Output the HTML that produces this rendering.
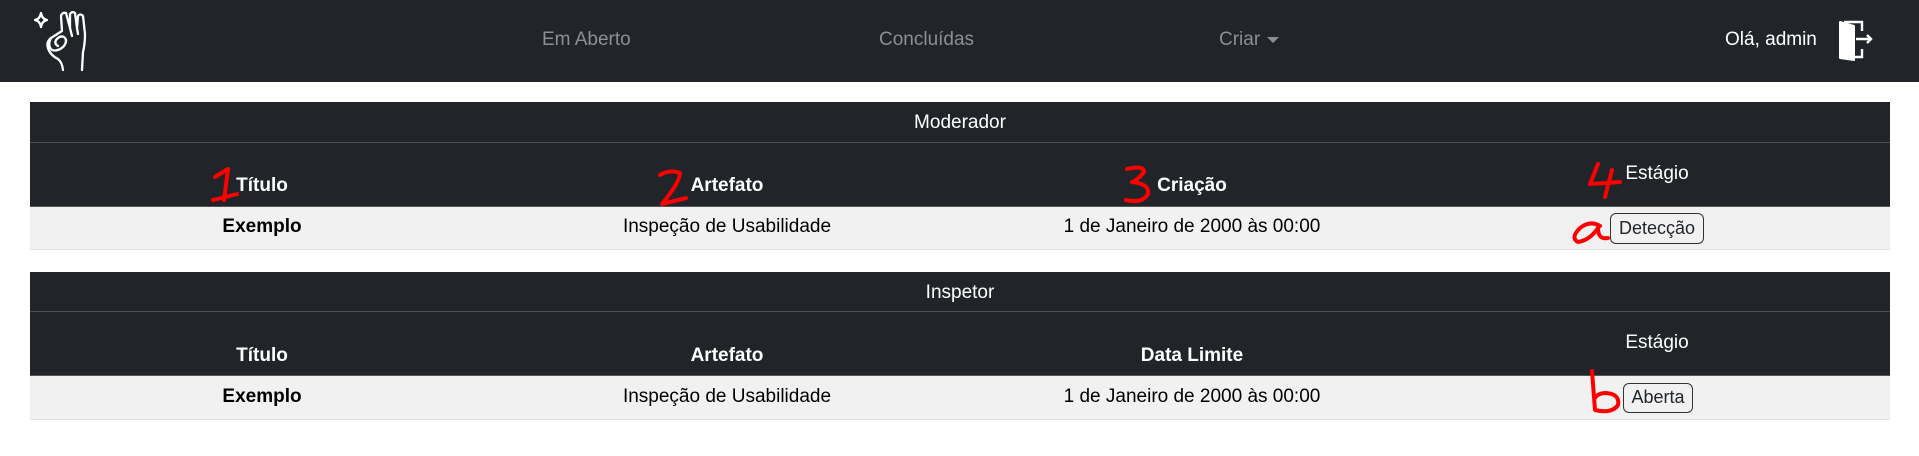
<!DOCTYPE html>
<html><head><meta charset="utf-8"><style>
*{margin:0;padding:0;box-sizing:border-box}
body{width:1919px;height:456px;background:#fff;font-family:"Liberation Sans",sans-serif;position:relative;overflow:hidden}
.abs{position:absolute}
.nav{left:0;top:0;width:1919px;height:82px;background:#212529}
.nl{color:#8c8f93;font-size:19px;top:29px}
.band{left:30px;width:1860px;background:#212529}
.t{position:absolute;transform:translateX(-50%);white-space:nowrap;font-size:19px}
.w{color:#fff}
.b{font-weight:bold}
.btn{position:absolute;border:1.5px solid #333;border-radius:6px;font-size:18px;color:#212529;text-align:center}
</style></head><body>
<div class="abs nav"></div>
<svg class="abs" style="left:0;top:0" width="100" height="82" viewBox="0 0 100 82" fill="none" stroke="#fff" stroke-width="2.3" stroke-linecap="round" stroke-linejoin="round">
<path d="M41 13 Q42 19 47 20 Q42 21 41 27 Q40 21 35 20 Q40 19 41 13Z"/>
<path d="M63 70 Q62 62 58 59 Q50 55 48 48 Q46 42 51 38 L62 31 L61 16 Q62 12 66 13 L70 28 L70 14 Q72 11 75 13 L77 28 L78 16 Q80 13 83 16 L85 34 Q85 44 83 52 L82 70"/>
<path d="M51 38 Q47 46 52 50 Q58 52 64 46 Q68 40 64 37 Q60 35 56 40 Q54 44 58 46"/>
<path d="M70 28 L72 36 M77 28 L78 34"/>
</svg>
<div class="abs nl" style="left:542px">Em Aberto</div>
<div class="abs nl" style="left:879px">Concluídas</div>
<div class="abs nl" style="left:1219px">Criar</div>
<div class="abs" style="left:1267px;top:37px;width:0;height:0;border-left:6px solid transparent;border-right:6px solid transparent;border-top:6px solid #8c8f93"></div>
<div class="abs" style="left:1725px;top:29px;color:#fff;font-size:19px">Olá, admin</div>
<svg class="abs" style="left:1836px;top:20px" width="40" height="42" viewBox="0 0 40 42">
<path d="M4 2 L18 6 L18 40 L4 38 Z" fill="#fff" stroke="#fff" stroke-width="2" stroke-linejoin="round"/>
<path d="M8 2 H26 V11 M26 29 V37 H18" fill="none" stroke="#fff" stroke-width="2.4"/>
<path d="M20 19 H35 M31 15 L35 19 L31 23" fill="none" stroke="#fff" stroke-width="2.4"/>
</svg>

<!-- table 1 -->
<div class="abs band" style="top:102px;height:104px"></div>
<div class="abs" style="left:30px;top:142px;width:1860px;height:1px;background:#4d5154"></div>
<div class="abs" style="left:30px;top:206px;width:1860px;height:44px;background:#f1f1f1;border-top:1px solid #555;border-bottom:1.5px solid #dee2e6"></div>
<div class="t w" style="left:960px;top:112px">Moderador</div>
<div class="t w b" style="left:262px;top:175px">Título</div>
<div class="t w b" style="left:727px;top:175px">Artefato</div>
<div class="t w b" style="left:1192px;top:175px">Criação</div>
<div class="t w" style="left:1657px;top:163px">Estágio</div>
<div class="t b" style="left:262px;top:216px">Exemplo</div>
<div class="t" style="left:727px;top:216px">Inspeção de Usabilidade</div>
<div class="t" style="left:1192px;top:216px">1 de Janeiro de 2000 às 00:00</div>
<div class="btn" style="left:1610px;top:213px;width:94px;height:31px;line-height:28px">Detecção</div>

<!-- table 2 -->
<div class="abs band" style="top:272px;height:103px"></div>
<div class="abs" style="left:30px;top:311px;width:1860px;height:1px;background:#4d5154"></div>
<div class="abs" style="left:30px;top:375px;width:1860px;height:45px;background:#f1f1f1;border-top:1px solid #555;border-bottom:1.5px solid #dee2e6"></div>
<div class="t w" style="left:960px;top:282px">Inspetor</div>
<div class="t w b" style="left:262px;top:345px">Título</div>
<div class="t w b" style="left:727px;top:345px">Artefato</div>
<div class="t w b" style="left:1192px;top:345px">Data Limite</div>
<div class="t w" style="left:1657px;top:332px">Estágio</div>
<div class="t b" style="left:262px;top:386px">Exemplo</div>
<div class="t" style="left:727px;top:386px">Inspeção de Usabilidade</div>
<div class="t" style="left:1192px;top:386px">1 de Janeiro de 2000 às 00:00</div>
<div class="btn" style="left:1623px;top:383px;width:70px;height:30px;line-height:27px">Aberta</div>

<!-- red annotations -->
<svg class="abs" style="left:0;top:0" width="1919" height="456" fill="none" stroke="#f00" stroke-width="4" stroke-linecap="round" stroke-linejoin="round">
<path d="M215 177 L228 169 L224 200 M213 200 Q222 198 237 194"/>
<path d="M660 175 Q670 169 680 173 Q680 182 662 204 L686 198"/>
<path d="M1127 169 Q1144 165 1144 172 Q1138 180 1132 182 Q1150 184 1148 194 Q1142 204 1126 200"/>
<path d="M1598 164 L1590 184 L1620 182 M1612 170 L1605 197"/>
<path d="M1600 226 Q1590 220 1580 228 Q1570 238 1578 242 Q1590 240 1598 228 Q1598 240 1608 238"/>
<path d="M1592 371 L1595 410 Q1612 414 1618 405 Q1620 394 1606 393 Q1598 393 1595 398"/>
</svg>
</body></html>
